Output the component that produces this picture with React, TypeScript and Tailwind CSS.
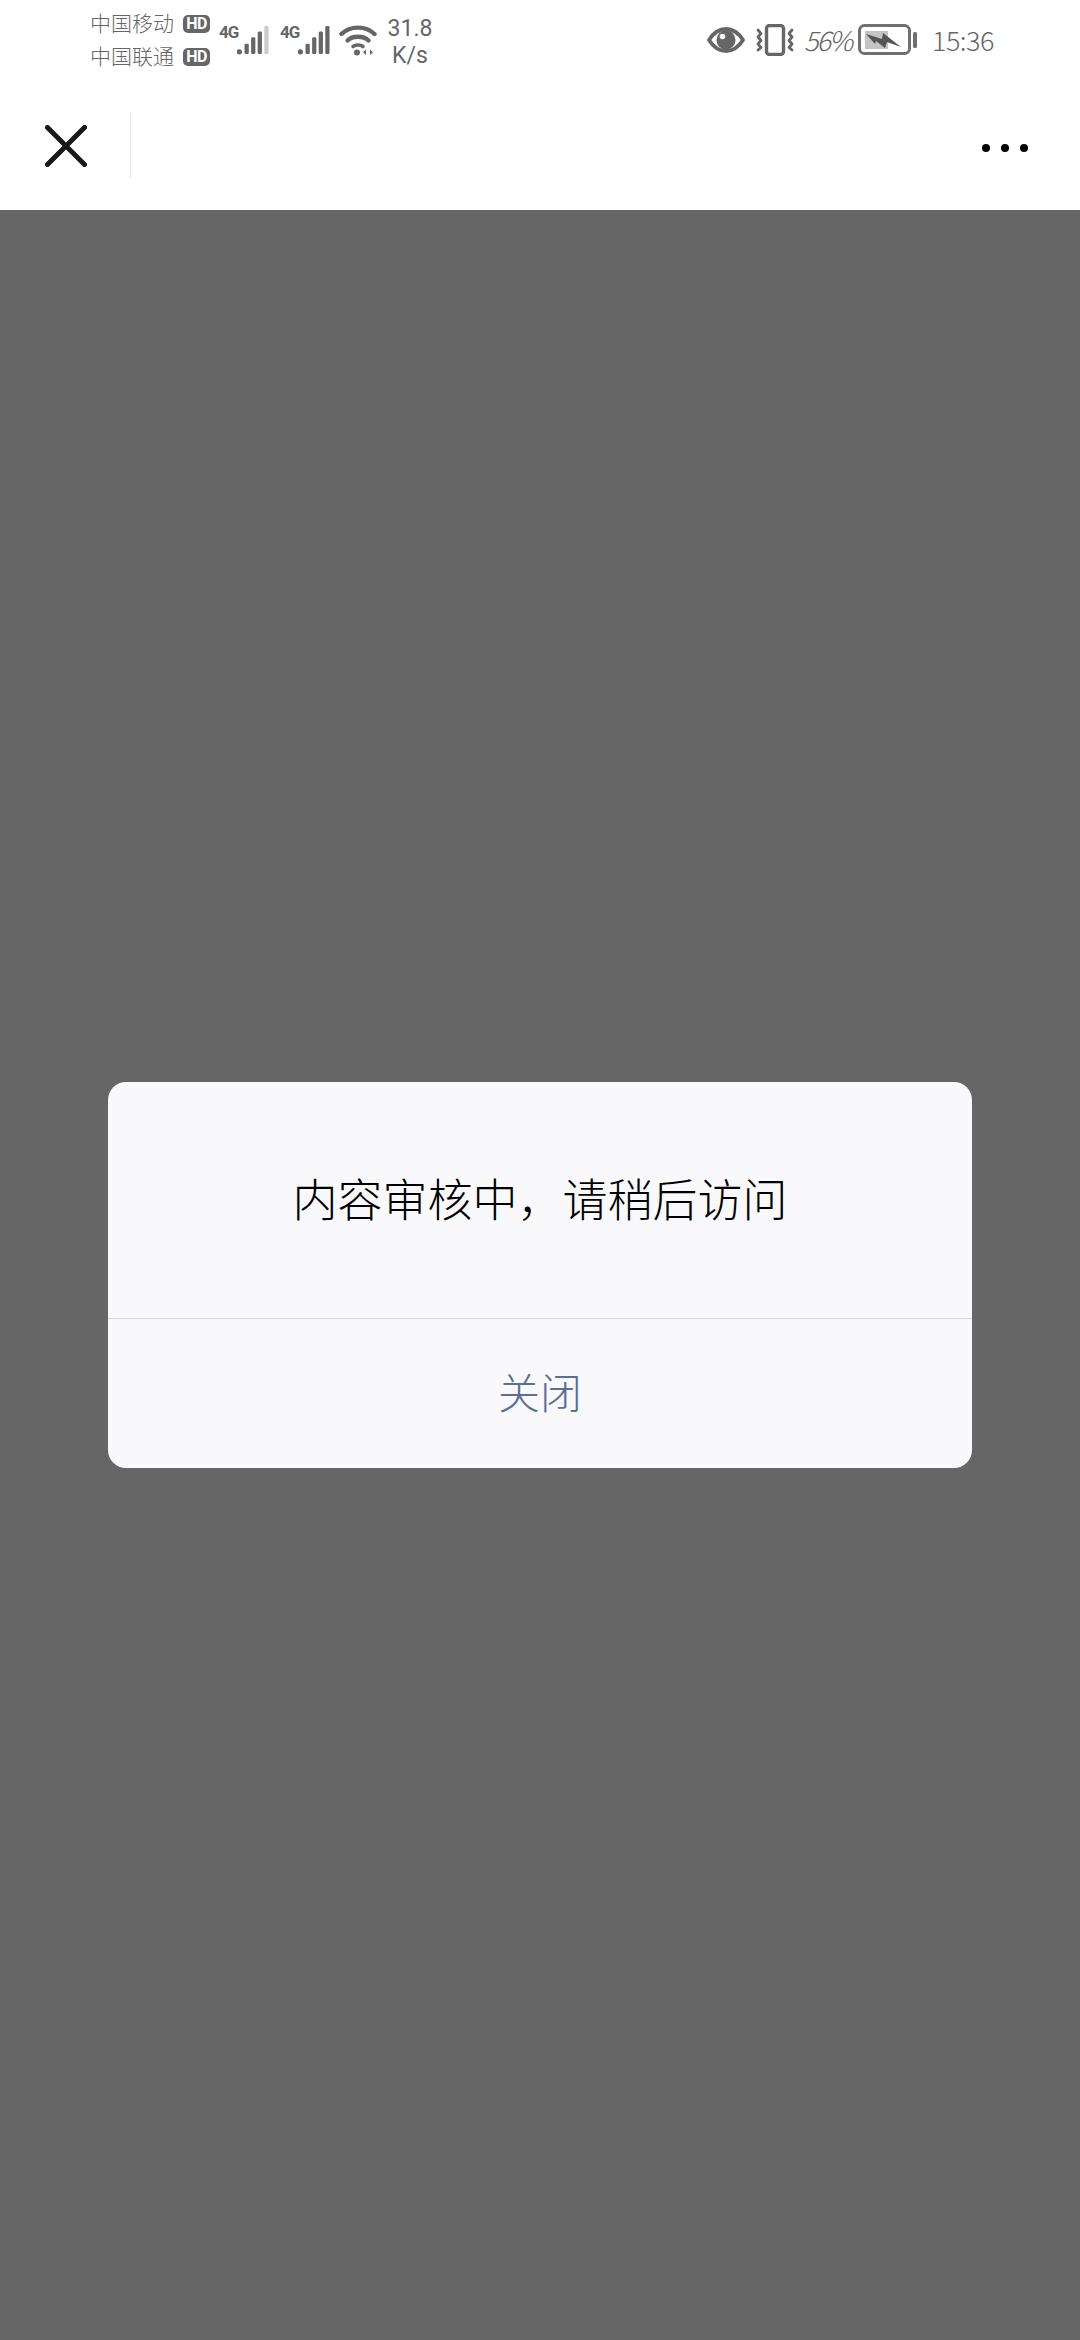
const cjk = "font-['Noto_Sans_CJK_SC','Noto_Sans',sans-serif]";

function Hd() {
  return (
    <span className="flex h-[18px] w-[27px] items-center justify-center rounded-[5px] bg-[#666] font-['Roboto',sans-serif] text-[16px] font-bold leading-none tracking-[-0.5px] text-white">
      HD
    </span>
  );
}

function Signal({ faded }: { faded?: boolean }) {
  return (
    <div className="flex w-[50px] items-start">
      <span className="mt-[24px] w-[18px] font-['Roboto',sans-serif] text-[17px] font-bold leading-[16px] tracking-[-1px] text-[#666]">
        4G
      </span>
      <svg width="34" height="32" viewBox="0 0 34 32" className="mt-[24px]" fill="#666">
        <circle cx="2.5" cy="28.5" r="2.8" />
        <rect x="8" y="20" width="4.500" height="11" rx="1.500" />
        <rect x="15" y="13" width="4.500" height="18" rx="1.500" />
        <rect x="22" y="7" width="4.500" height="24" rx="1.500" />
        <rect x="29" y="1" width="4.500" height="30" rx="1.500" fill={faded ? "#ccc" : "#666"} />
      </svg>
    </div>
  );
}

function Wifi() {
  return (
    <svg width="38" height="32" viewBox="0 0 38 32" fill="none" stroke="#666" strokeWidth="4.400" strokeLinecap="round">
      <path d="M2.500 10C11 1.500 27 1.500 35.500 10" />
      <path d="M8.500 16.500C13.500 11.500 24.500 11.500 29.500 16.500" />
      <path d="M14 22.500C16.500 20.500 21.500 20.500 24 22.500" strokeWidth="3.600" />
      <circle cx="18" cy="28.500" r="3" fill="#666" stroke="none" />
      <path d="M27 25.500 L27 31 L24 28.200 Z M31 25.500 L31 31 L34 28.200 Z" fill="#666" stroke="none" />
    </svg>
  );
}

function Eye() {
  return (
    <svg width="38" height="26" viewBox="0 0 38 26" className="block">
      <path d="M2 13C7 5 12.500 2 19 2S31 5 36 13C31 21 25.500 24 19 24S7 21 2 13Z" fill="none" stroke="#666" strokeWidth="3.800" strokeLinejoin="round" />
      <circle cx="19" cy="13" r="9.500" fill="#666" />
      <circle cx="15.500" cy="9.500" r="2.800" fill="#fff" />
    </svg>
  );
}

function Vibrate() {
  return (
    <svg width="38" height="32" viewBox="0 0 38 32" fill="none" stroke="#666" strokeLinecap="round" strokeLinejoin="round">
      <rect x="10.500" y="1.500" width="17" height="29" rx="3" strokeWidth="3.400" />
      <path d="M2 6L5 9.500L2 13L5 16.500L2 20L5 23.500L2 26" strokeWidth="2.800" />
      <path d="M36 6L33 9.500L36 13L33 16.500L36 20L33 23.500L36 26" strokeWidth="2.800" />
    </svg>
  );
}

function Battery() {
  return (
    <svg width="60" height="32" viewBox="0 0 60 32">
      <rect x="1.500" y="1.500" width="50" height="28" rx="5" fill="none" stroke="#707070" strokeWidth="3" />
      <rect x="7" y="7" width="23" height="18" fill="#c4c4c4" />
      <path d="M8 10L24 15L25 9L43 23L29 18L27 24L18 17L17 20Z" fill="#555" />
      <rect x="55" y="8" width="4" height="16" rx="1.500" fill="#707070" />
    </svg>
  );
}

export default function App() {
  return (
    <div className={`flex h-[2340px] w-[1080px] flex-col bg-[#666] ${cjk}`}>
      {/* Status bar */}
      <div className="flex h-[80px] items-start justify-between bg-white pl-[90px] pr-[86px]">
        <div className="flex items-start">
          <div className="mt-[14px] flex w-[120px] flex-col gap-[13px]">
            <div className="flex h-[20px] items-center justify-between text-[21px] font-light leading-none text-[#666]">
              <span className="pb-[3px]">中国移动</span>
              <Hd />
            </div>
            <div className="flex h-[20px] items-center justify-between text-[21px] font-light leading-none text-[#666]">
              <span className="pb-[3px]">中国联通</span>
              <Hd />
            </div>
          </div>
          <div className="ml-[9px]">
            <Signal faded />
          </div>
          <div className="ml-[11px]">
            <Signal />
          </div>
          <div className="ml-[9px] mt-[24px]">
            <Wifi />
          </div>
          <div className="ml-[10px] mt-[15px] flex w-[46px] flex-col items-center font-['Roboto',sans-serif] text-[23px] leading-[27px] text-[#666]">
            <span>31.8</span>
            <span>K/s</span>
          </div>
        </div>
        <div className="flex items-center pt-[24px]">
          <Eye />
          <div className="ml-[11px]">
            <Vibrate />
          </div>
          <span className="ml-[10px] w-[46px] text-[27px] font-light italic leading-[32px] tracking-[-2px] text-[#666]">
            56%
          </span>
          <div className="ml-[8px]">
            <Battery />
          </div>
          <span className="ml-[14px] text-[27px] font-light leading-[32px] tracking-[-0.5px] text-[#666]">
            15:36
          </span>
        </div>
      </div>

      {/* Nav bar */}
      <div className="flex h-[130px] items-center justify-between bg-white pl-[45px] pr-[52px]">
        <div className="flex items-center">
          <svg width="42" height="42" viewBox="0 0 42 42" className="mt-[2px]" stroke="#191919" strokeWidth="5" strokeLinecap="square">
            <path d="M2.500 2.500L39.500 39.500M39.500 2.500L2.500 39.500" />
          </svg>
          <div className="ml-[43px] h-[66px] w-px bg-[#e8e8e8]" />
        </div>
        <div className="mt-[6px] flex gap-[11px]">
          <span className="h-[8px] w-[8px] rounded-full bg-black" />
          <span className="h-[8px] w-[8px] rounded-full bg-black" />
          <span className="h-[8px] w-[8px] rounded-full bg-black" />
        </div>
      </div>

      {/* Dialog */}
      <div className="flex flex-1 items-center justify-center">
        <div className="flex h-[386px] w-[864px] flex-col overflow-hidden rounded-[18px] bg-[#f9f9fb]">
          <div className="flex h-[236px] items-center justify-center pb-[6px] text-[45px] font-light leading-none text-black">
            内容审核中，请稍后访问
          </div>
          <div className="h-px bg-[#d8d8dc]" />
          <button className="flex flex-1 items-center justify-center pb-[6px] text-[42px] font-light leading-none text-[#5a6e96]">
            关闭
          </button>
        </div>
      </div>
    </div>
  );
}
